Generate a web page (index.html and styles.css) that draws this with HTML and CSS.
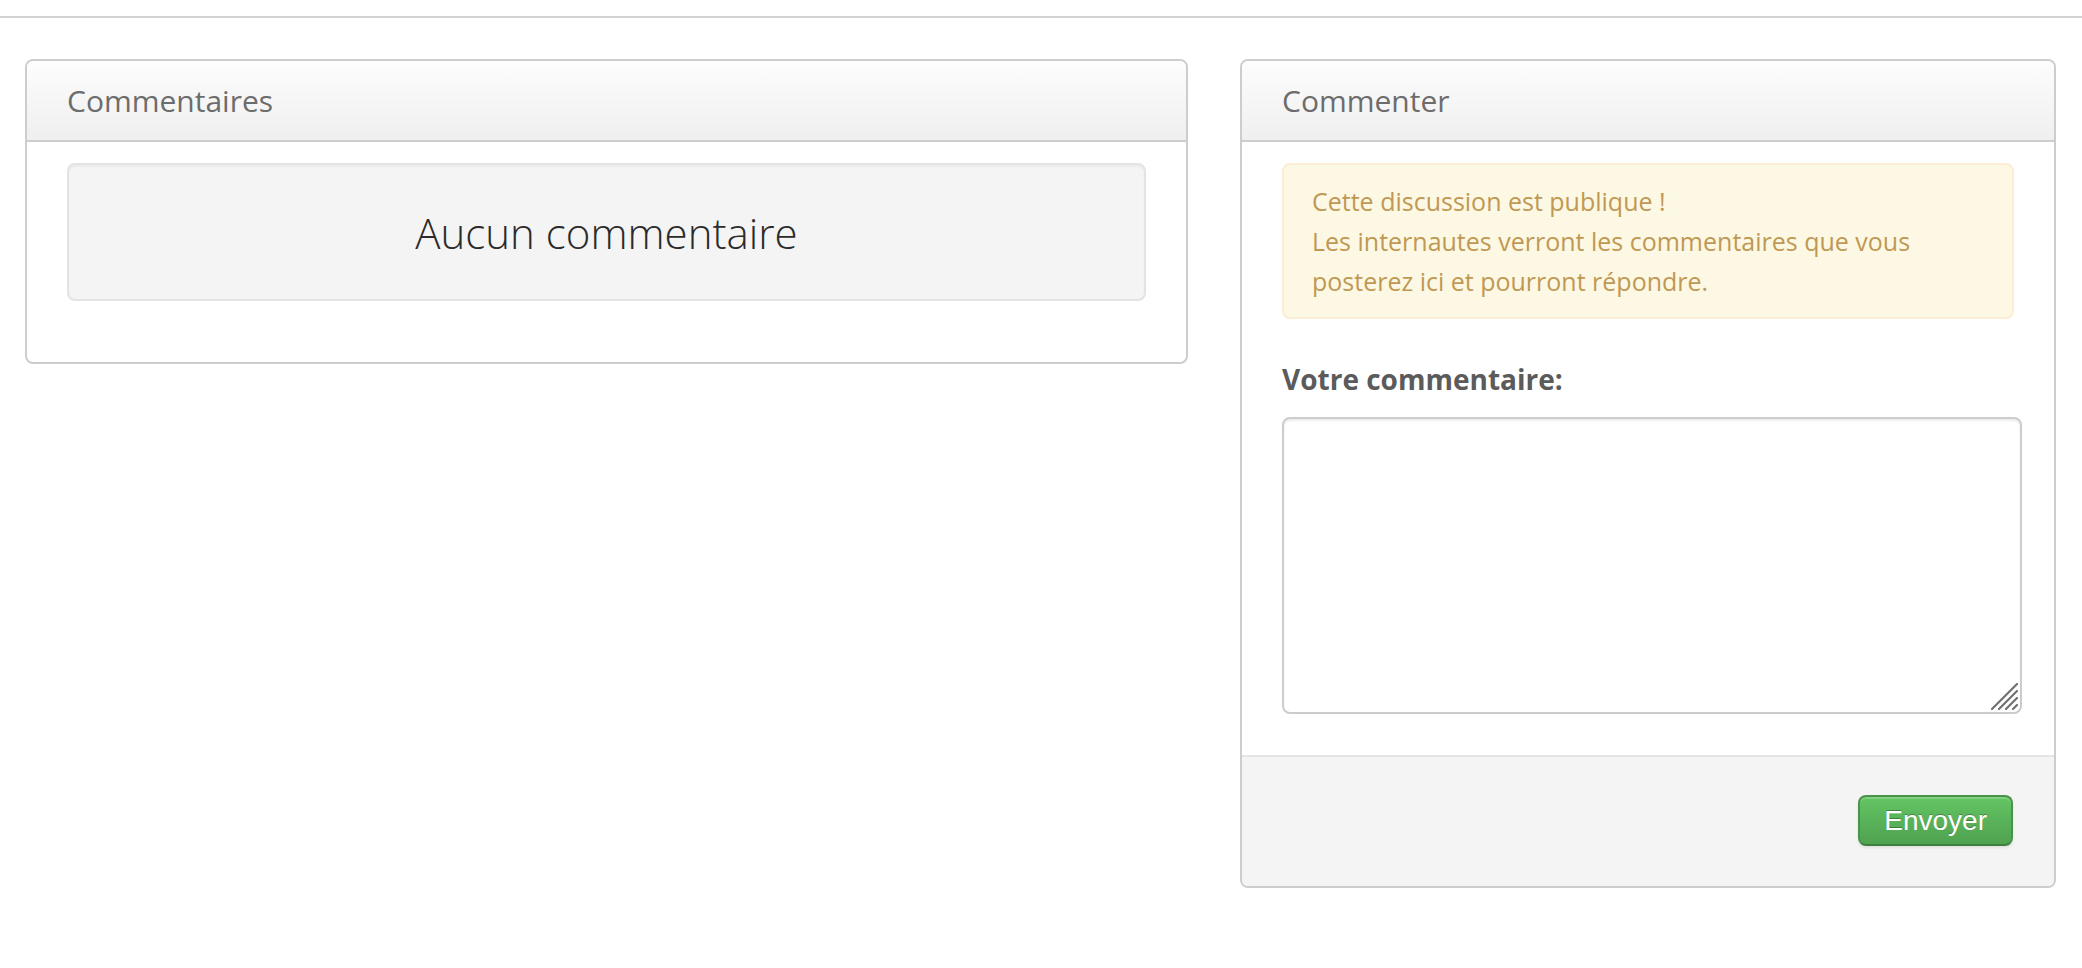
FILE: index.html
```html
<!DOCTYPE html>
<html lang="fr">
<head>
<meta charset="utf-8">
<title>Commentaires</title>
<link rel="stylesheet" href="styles.css">
</head>
<body>
<div class="topbar"></div>
<div class="container">
  <section class="panel panel-comments">
    <header class="panel-head">Commentaires</header>
    <div class="panel-body">
      <div class="well">Aucun commentaire</div>
    </div>
  </section>
  <section class="panel panel-form">
    <header class="panel-head">Commenter</header>
    <div class="panel-body">
      <div class="alert">Cette discussion est publique !<br>Les internautes verront les commentaires que vous posterez ici et pourront répondre.</div>
      <label class="field-label" for="comment">Votre commentaire:</label>
      <div class="field-wrap">
        <textarea id="comment" class="field"></textarea>
        <svg class="grip" width="28" height="28" viewBox="0 0 28 28" aria-hidden="true">
          <line x1="1" y1="26" x2="26" y2="1" />
          <line x1="8" y1="26" x2="26" y2="8" />
          <line x1="15" y1="26" x2="26" y2="15" />
          <line x1="22" y1="26" x2="26" y2="22" />
        </svg>
      </div>
    </div>
    <footer class="panel-foot">
      <button class="btn-success" type="button">Envoyer</button>
    </footer>
  </section>
</div>
</body>
</html>
```

FILE: styles.css
```css
html, body {
  margin: 0;
  padding: 0;
  background: #fff;
}
body {
  font-family: "Open Sans", "Liberation Sans", sans-serif;
  color: #333;
}
.topbar {
  height: 16px;
  border-bottom: 2px solid #d2d2d2;
}
.container {
  display: grid;
  grid-template-columns: 1163fr 816fr;
  column-gap: 52px;
  align-items: start;
  padding: 41px 26px 0 25px;
}
.panel {
  border: 2px solid #cdcdcd;
  border-radius: 8px;
  background: #fff;
  overflow: hidden;
}
.panel-head {
  height: 79px;
  line-height: 79px;
  padding: 0 40px;
  font-size: 30px;
  color: #6c6c6c;
  background: linear-gradient(to bottom, #fdfdfd 0%, #efefef 100%);
  border-bottom: 2px solid #cdcdcd;
}
.panel-body {
  padding: 21px 40px 0 40px;
}
.panel-comments .panel-body {
  padding-bottom: 61px;
}
.panel-form .panel-body {
  padding-bottom: 41px;
}
.well {
  height: 134px;
  display: flex;
  align-items: center;
  justify-content: center;
  background: #f4f4f4;
  border: 2px solid #e3e3e3;
  border-radius: 8px;
  box-shadow: inset 0 2px 2px rgba(0,0,0,0.04);
  font-size: 42px;
  font-weight: 300;
  color: #2b2b2b;
}
.alert {
  padding: 16px 70px 16px 28px;
  background: #fcf8e3;
  border: 2px solid #fbeed5;
  border-radius: 8px;
  color: #c09853;
  font-size: 25px;
  line-height: 40px;
  margin-bottom: 40px;
}
.field-label {
  display: block;
  font-size: 28px;
  font-weight: 700;
  line-height: 40px;
  color: #5b5b5b;
  margin-bottom: 18px;
}
.field-wrap {
  position: relative;
  width: calc(100% + 8px);
}
.field {
  display: block;
  box-sizing: border-box;
  width: 100%;
  height: 297px;
  margin: 0;
  padding: 8px 12px;
  border: 2px solid #cccccc;
  border-radius: 8px;
  box-shadow: inset 0 2px 2px rgba(0,0,0,0.075);
  font-family: "Open Sans", "Liberation Sans", sans-serif;
  font-size: 26px;
  background: #fff;
  resize: none;
  outline: none;
}
.grip {
  position: absolute;
  right: 3px;
  bottom: 3px;
  stroke: #6f6f6f;
  stroke-width: 2.2;
  stroke-linecap: round;
  pointer-events: none;
}
.panel-foot {
  display: flex;
  justify-content: flex-end;
  padding: 38px 41px 40px 40px;
  background: #f4f4f4;
  border-top: 2px solid #e5e5e5;
}
.btn-success {
  height: 51px;
  padding: 0 24px;
  border: 2px solid #4a934a;
  border-bottom-color: #3f7f3f;
  border-radius: 8px;
  background: linear-gradient(to bottom, #63c463 0%, #50a250 100%);
  color: #fff;
  font-family: "Liberation Sans", Arial, sans-serif;
  font-size: 28px;
  line-height: 47px;
  text-shadow: 0 -1px 0 rgba(0,0,0,0.3);
  box-shadow: inset 0 2px 0 rgba(255,255,255,0.2), 0 2px 3px rgba(0,0,0,0.08);
  cursor: pointer;
}
```
